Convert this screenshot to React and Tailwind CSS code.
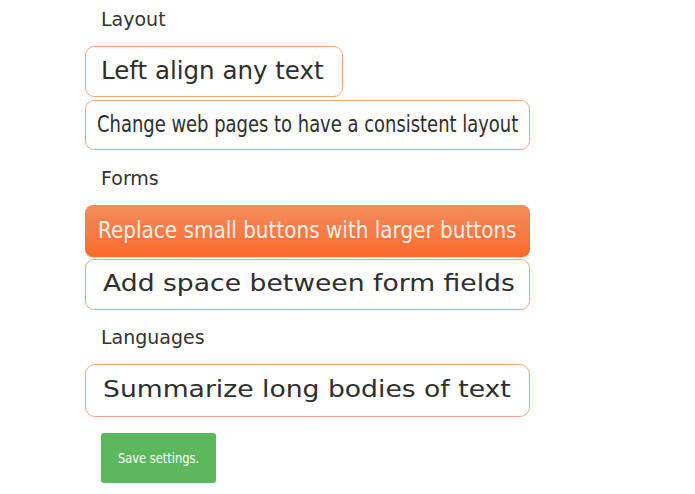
import React from "react";

function Label({ children, className }) {
  return (
    <div className={"pl-[16px] text-[19px] leading-[28px] text-[#333] " + className}>
      {children}
    </div>
  );
}

export default function App() {
  return (
    <div className="min-h-[494px] w-[695px] bg-white pl-[85px] pt-[5px] font-['DejaVu_Sans',Verdana,sans-serif]">
      <Label>Layout</Label>
      <div className="mt-[13px] flex h-[51px] w-[258px] items-center rounded-[9px] border border-[#f0a684] bg-white pb-[1px] pl-[15px] text-[24.5px] leading-none text-[#2e2e2e]">
        Left align any text
      </div>
      <div className="mt-[3px] flex h-[50px] w-[445px] items-center overflow-hidden rounded-[9px] border border-[#f0a684] bg-white pb-[2px] pl-[11px] text-[23px] leading-none text-[#2e2e2e]">
        <span className="inline-block origin-left scale-x-[0.78] whitespace-nowrap">Change web pages to have a consistent layout</span>
      </div>

      <Label className="mt-[14px]">Forms</Label>
      <div className="mt-[13px] flex h-[52px] w-[445px] items-center overflow-hidden rounded-[8px] bg-gradient-to-b from-[#f38c5e] to-[#fb6a28] pb-[2px] pl-[13px] text-[23px] leading-none text-[#fdf0e8] shadow-[0_1px_1px_rgba(0,0,0,0.15)]">
        <span className="inline-block origin-left scale-x-[0.87] whitespace-nowrap">Replace small buttons with larger buttons</span>
      </div>
      <div className="mt-[2px] flex h-[51px] w-[445px] items-center overflow-hidden rounded-[9px] border border-[#f0a684] bg-white pb-[3px] pl-[17px] text-[23px] leading-none text-[#2e2e2e]">
        <span className="inline-block origin-left scale-x-[1.157] whitespace-nowrap">Add space between form fields</span>
      </div>

      <Label className="mt-[13px]">Languages</Label>
      <div className="mt-[13px] flex h-[53px] w-[445px] items-center overflow-hidden rounded-[10px] border border-[#f0a684] bg-white pb-[2px] pl-[17px] text-[23px] leading-none text-[#2e2e2e]">
        <span className="inline-block origin-left scale-x-[1.157] whitespace-nowrap">Summarize long bodies of text</span>
      </div>

      <button className="ml-[16px] mt-[16px] flex h-[50px] w-[115px] items-center justify-center rounded-[3px] bg-[#5cb85c] text-[14px] text-white">
        <span className="inline-block scale-x-[0.82] whitespace-nowrap">Save settings.</span>
      </button>
    </div>
  );
}
